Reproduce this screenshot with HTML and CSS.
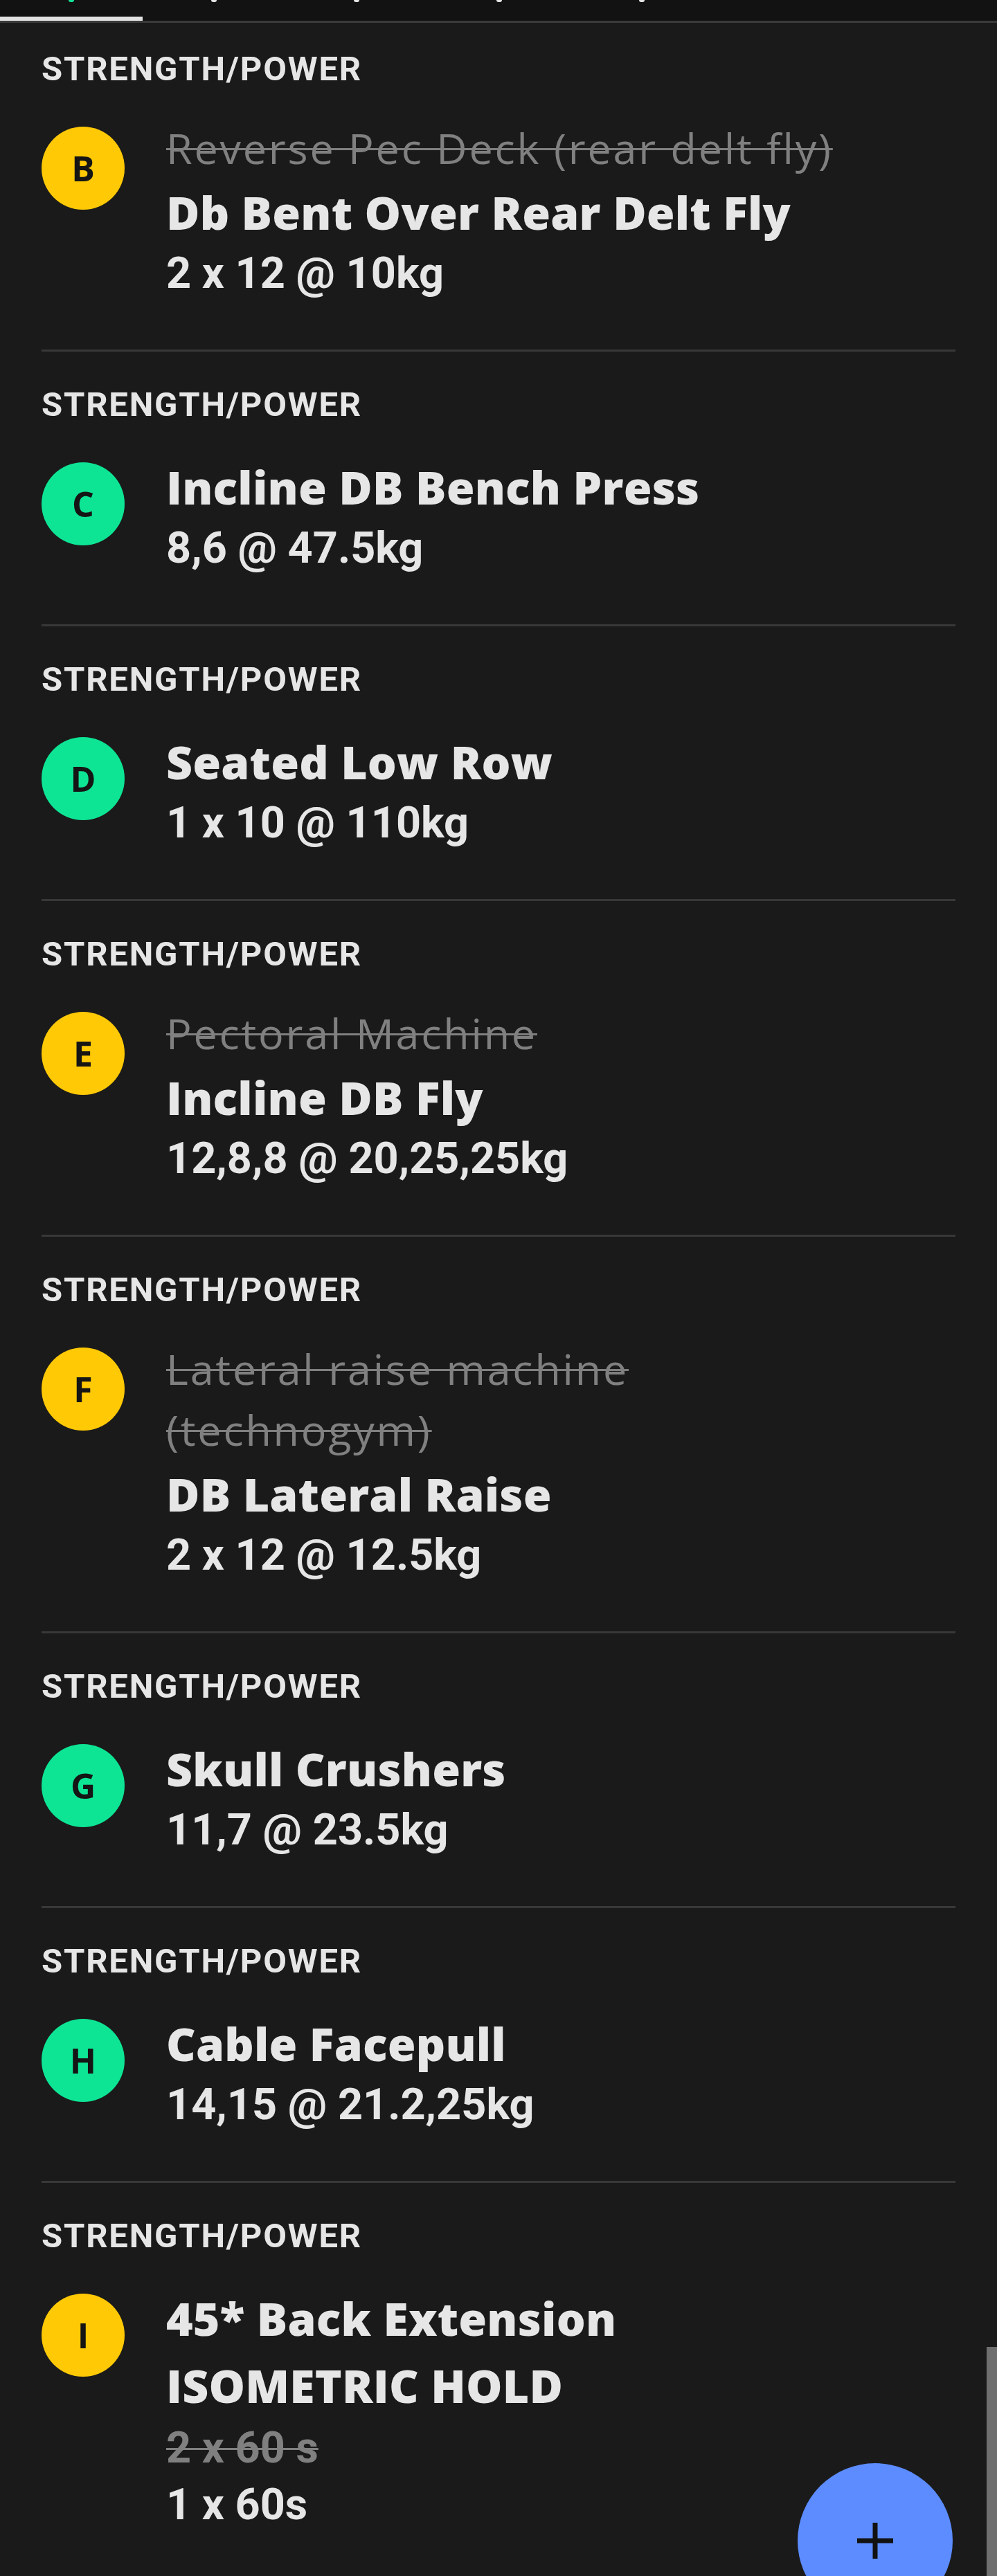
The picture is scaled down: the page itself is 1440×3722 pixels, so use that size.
FILE: index.html
```html
<!DOCTYPE html>
<html lang="en">
<head>
    <meta charset="UTF-8">
    <meta name="viewport" content="width=device-width, initial-scale=1.0">
    <title>Workout</title>
    <link rel="stylesheet" href="styles.css">
</head>
<body>

    <div class="tabs">
        <div class="tab active"><span class="tab-mark green"></span></div>
        <div class="tab"><span class="tab-mark"></span></div>
        <div class="tab"><span class="tab-mark"></span></div>
        <div class="tab"><span class="tab-mark"></span></div>
        <div class="tab"><span class="tab-mark"></span></div>
        <div class="tab"></div>
        <div class="tab"></div>
    </div>

    <div class="scroll">
        <div class="list">

            <div class="exercise">
                <div class="category">STRENGTH/POWER</div>
                <div class="row">
                    <div class="badge yellow">B</div>
                    <div class="info">
                        <div class="was">Reverse Pec Deck (rear delt fly)</div>
                        <div class="name">Db Bent Over Rear Delt Fly</div>
                        <div class="stats">2 x 12 @ 10kg</div>
                    </div>
                </div>
            </div>

            <div class="exercise">
                <div class="category">STRENGTH/POWER</div>
                <div class="row">
                    <div class="badge green">C</div>
                    <div class="info">
                        <div class="name">Incline DB Bench Press</div>
                        <div class="stats">8,6 @ 47.5kg</div>
                    </div>
                </div>
            </div>

            <div class="exercise">
                <div class="category">STRENGTH/POWER</div>
                <div class="row">
                    <div class="badge green">D</div>
                    <div class="info">
                        <div class="name">Seated Low Row</div>
                        <div class="stats">1 x 10 @ 110kg</div>
                    </div>
                </div>
            </div>

            <div class="exercise">
                <div class="category">STRENGTH/POWER</div>
                <div class="row">
                    <div class="badge yellow">E</div>
                    <div class="info">
                        <div class="was">Pectoral Machine</div>
                        <div class="name">Incline DB Fly</div>
                        <div class="stats">12,8,8 @ 20,25,25kg</div>
                    </div>
                </div>
            </div>

            <div class="exercise">
                <div class="category">STRENGTH/POWER</div>
                <div class="row">
                    <div class="badge yellow">F</div>
                    <div class="info">
                        <div class="was narrow">Lateral raise machine (technogym)</div>
                        <div class="name">DB Lateral Raise</div>
                        <div class="stats">2 x 12 @ 12.5kg</div>
                    </div>
                </div>
            </div>

            <div class="exercise">
                <div class="category">STRENGTH/POWER</div>
                <div class="row">
                    <div class="badge green">G</div>
                    <div class="info">
                        <div class="name">Skull Crushers</div>
                        <div class="stats">11,7 @ 23.5kg</div>
                    </div>
                </div>
            </div>

            <div class="exercise">
                <div class="category">STRENGTH/POWER</div>
                <div class="row">
                    <div class="badge green">H</div>
                    <div class="info">
                        <div class="name">Cable Facepull</div>
                        <div class="stats">14,15 @ 21.2,25kg</div>
                    </div>
                </div>
            </div>

            <div class="exercise">
                <div class="category">STRENGTH/POWER</div>
                <div class="row">
                    <div class="badge yellow">I</div>
                    <div class="info">
                        <div class="name">45* Back Extension<br>ISOMETRIC HOLD</div>
                        <div class="stats was-stats">2 x 60 s</div>
                        <div class="stats">1 x 60s</div>
                    </div>
                </div>
            </div>

        </div>
    </div>

    <div class="scrollbar"></div>

    <button class="fab" aria-label="Add exercise">
        <svg width="52" height="52" viewBox="0 0 52 52">
            <path d="M26 0 V52 M0 26 H52" stroke="#121212" stroke-width="7" fill="none"/>
        </svg>
    </button>

</body>
</html>
```

FILE: styles.css
```css
/* Base */
html, body {
    margin: 0;
    height: 100%;
}
body {
    background-color: #1a1a1a;
    color: #e6e6e6;
    font-family: "Open Sans", sans-serif;
    overflow: hidden;
}

/* Tab bar (mostly scrolled out of view) */
.tabs {
    display: flex;
    height: 30px;
    background-color: #121212;
    border-bottom: 3px solid #3a3a3a;
}
.tab {
    width: 206px;
    flex-shrink: 0;
    display: flex;
    justify-content: center;
    box-sizing: border-box;
}
.tab.active {
    border-bottom: 6px solid #e2e2e2;
}
.tab-mark {
    width: 8px;
    height: 3px;
    border-radius: 0 0 4px 4px;
    background-color: #e6e6e6;
}
.tab-mark.green {
    background-color: #10e597;
}

/* Scrolling list */
.scroll {
    overflow: hidden;
    height: calc(100% - 33px);
}
.list {
    margin-top: -10px;
}

.exercise {
    margin: 0 60px;
    padding: 49px 0 71px;
    border-bottom: 3px solid #383838;
}

.category {
    font-family: Roboto, sans-serif;
    font-weight: 700;
    font-size: 49px;
    line-height: 56px;
    letter-spacing: 1.8px;
}

.row {
    display: flex;
    align-items: flex-start;
    gap: 60px;
    margin-top: 42px;
}

.badge {
    width: 120px;
    height: 120px;
    flex-shrink: 0;
    margin-top: 13px;
    border-radius: 50%;
    display: flex;
    align-items: center;
    justify-content: center;
    color: #151515;
    font-weight: 700;
    font-size: 50px;
}
.badge.yellow {
    background-color: #ffc905;
}
.badge.green {
    background-color: #0de595;
}

.info {
    min-width: 0;
}

/* Old (replaced) exercise name */
.was {
    color: #808080;
    font-size: 61px;
    line-height: 88px;
    letter-spacing: 2.8px;
    text-decoration: line-through;
    text-decoration-thickness: 3px;
}
.was.narrow {
    max-width: 800px;
}

.name {
    font-weight: 800;
    font-size: 66px;
    line-height: 97px;
    letter-spacing: 0.2px;
}

.stats {
    font-family: Roboto, sans-serif;
    font-weight: 700;
    font-size: 63px;
    line-height: 79px;
}
.stats.was-stats {
    color: #808080;
    line-height: 84px;
    text-decoration: line-through;
    text-decoration-thickness: 3px;
}

/* Overlays */
.scrollbar {
    position: absolute;
    right: 0;
    top: 3391px;
    bottom: 0;
    width: 15px;
    background-color: #6f6f6f;
}

.fab {
    position: absolute;
    left: 1152px;
    top: 3559px;
    width: 224px;
    height: 224px;
    border: none;
    border-radius: 50%;
    background-color: #5c8cff;
    display: flex;
    align-items: center;
    justify-content: center;
    padding: 0;
}
```
